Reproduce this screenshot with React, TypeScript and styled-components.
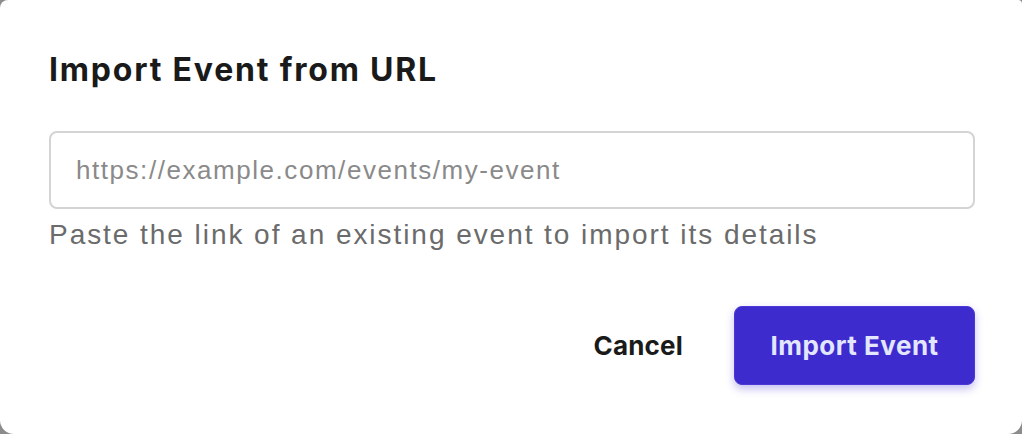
import styled, { createGlobalStyle } from "styled-components";

const GlobalStyle = createGlobalStyle`
  html, body {
    margin: 0;
    padding: 0;
    background-color: #8c8c8c;
  }
  * {
    box-sizing: border-box;
  }
`;

const Dialog = styled.div`
  width: 1022px;
  height: 434px;
  background-color: #ffffff;
  border-radius: 8px 4px 14px 14px;
  padding: 0 47px 0 49px;
  display: flex;
  flex-direction: column;
  font-family: Inter, "Liberation Sans", sans-serif;
`;

const Title = styled.h2`
  margin: 52px 0 0;
  font-size: 32px;
  line-height: 36px;
  font-weight: 700;
  color: #1a1a1a;
  letter-spacing: 1.8px;
  white-space: nowrap;
`;

const UrlInput = styled.input`
  margin-top: 43px;
  width: 100%;
  height: 78px;
  padding: 0 25px;
  border: 2px solid #d4d4d4;
  border-radius: 8px;
  background: #ffffff;
  font-family: "Liberation Sans", Arial, sans-serif;
  font-size: 26px;
  letter-spacing: 1.55px;
  color: #1a1a1a;
  outline: none;

  &::placeholder {
    color: #8a8a8a;
  }
`;

const HelpText = styled.p`
  margin: 10px 0 0;
  font-family: "Liberation Sans", Arial, sans-serif;
  font-size: 28px;
  line-height: 32px;
  letter-spacing: 1.95px;
  color: #6b6b6b;
  white-space: nowrap;
`;

const Footer = styled.div`
  margin-top: 55px;
  display: flex;
  justify-content: flex-end;
  align-items: center;
  gap: 51px;
`;

const Button = styled.button<{ $primary?: boolean }>`
  font-family: Inter, "Liberation Sans", sans-serif;
  font-size: 26px;
  font-weight: 700;
  cursor: pointer;
  border-radius: 8px;
  height: 79px;
  ${({ $primary }) =>
    $primary
      ? `
    width: 241px;
    background-color: #3e2bcd;
    border: 1px solid #4a39d6;
    color: #e3e6ff;
    letter-spacing: 0.5px;
    box-shadow: 0 4px 8px rgba(62, 43, 205, 0.3);
  `
      : `
    padding: 0;
    background: transparent;
    border: none;
    color: #1a1a1a;
    letter-spacing: 0.2px;
  `}
`;

export default function App() {
  return (
    <>
      <GlobalStyle />
      <Dialog>
        <Title>Import Event from URL</Title>
        <UrlInput placeholder="https://example.com/events/my-event" />
        <HelpText>Paste the link of an existing event to import its details</HelpText>
        <Footer>
          <Button>Cancel</Button>
          <Button $primary>Import Event</Button>
        </Footer>
      </Dialog>
    </>
  );
}
